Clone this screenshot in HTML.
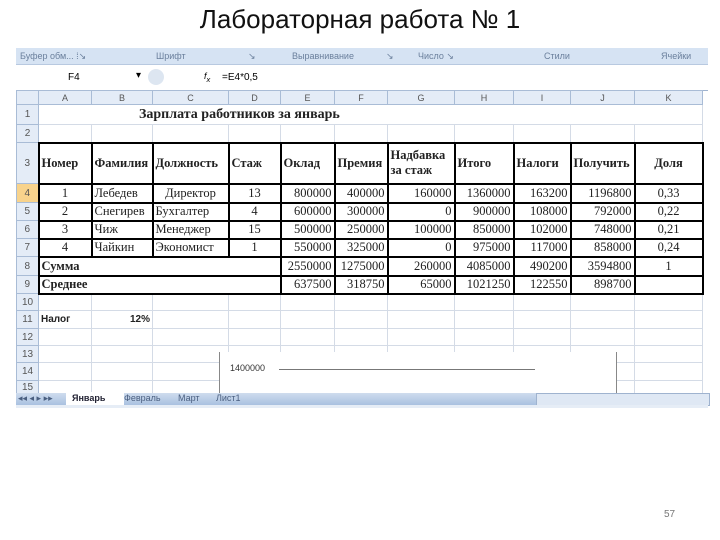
<!DOCTYPE html>
<html><head><meta charset="utf-8"><style>
body{margin:0;width:720px;height:540px;background:#fff;position:relative;overflow:hidden;font-family:"Liberation Sans",sans-serif}
.abs{position:absolute}
#title{left:0;width:720px;top:4px;text-align:center;font-size:26px;color:#111}
#rib{left:16px;top:48px;width:692px;height:16px;background:#d6e3f3;font-size:9px;color:#6a7f9c}
#rib span{position:absolute;top:3px}
#fx{left:16px;top:64px;width:692px;height:25px;background:#fff;border-top:1px solid #b8c9e0;border-bottom:1px solid #9fb3cf;font-size:10px}
table{position:absolute;left:16px;top:90px;border-collapse:collapse;table-layout:fixed;font-family:"Liberation Serif",serif;font-size:12.5px}
td{border:1px solid #d4dbe6;padding:0 2px;white-space:nowrap;overflow:hidden;color:#222}
tr.h td{background:#e4ecf7;color:#555;font-family:"Liberation Sans",sans-serif;font-size:9px;text-align:center;border-color:#a9bcd6}
td.rh{background:#e4ecf7;color:#555;font-family:"Liberation Sans",sans-serif;font-size:10px;text-align:center;border-color:#a9bcd6;padding:0}
td.k{border:2px solid #000}
td.b{font-weight:bold}
.r{text-align:right}.c{text-align:center}
td.or{background:#f8d38c}
</style></head><body>
<div class="abs" id="title">Лабораторная работа № 1</div>
<div class="abs" id="rib">
<span style="left:4px">Буфер обм... ⁞↘</span><span style="left:140px">Шрифт</span><span style="left:232px">↘</span>
<span style="left:276px">Выравнивание</span><span style="left:370px">↘</span><span style="left:402px">Число ↘</span><span style="left:528px">Стили</span><span style="left:645px">Ячейки</span>
</div>
<div class="abs" id="fx">
<span class="abs" style="left:52px;top:7px">F4</span><span class="abs" style="left:120px;top:5px">▾</span>
<span class="abs" style="left:132px;top:4px;width:16px;height:16px;border-radius:8px;background:#dde6f1"></span>
<span class="abs" style="left:188px;top:6px;font-style:italic;font-size:9px">f<sub>x</sub></span>
<span class="abs" style="left:206px;top:7px">=E4*0,5</span>
</div>
<table>
<colgroup><col style="width:22px"><col style="width:53px"><col style="width:61px"><col style="width:76px"><col style="width:52px"><col style="width:54px"><col style="width:53px"><col style="width:67px"><col style="width:59px"><col style="width:57px"><col style="width:64px"><col style="width:68px"></colgroup>
<tr class="h" style="height:14px"><td></td><td>A</td><td>B</td><td>C</td><td>D</td><td>E</td><td class="or">F</td><td>G</td><td>H</td><td>I</td><td>J</td><td>K</td></tr>
<tr style="height:20px"><td class="rh">1</td><td colspan="11" style="padding-left:100px;font-weight:bold;font-size:14px">Зарплата работников за январь</td></tr>
<tr style="height:18px"><td class="rh">2</td><td></td><td></td><td></td><td></td><td></td><td></td><td></td><td></td><td></td><td></td><td></td></tr>
<tr style="height:41px"><td class="rh">3</td><td class="k b">Номер</td><td class="k b">Фамилия</td><td class="k b">Должность</td><td class="k b">Стаж</td><td class="k b">Оклад</td><td class="k b">Премия</td><td class="k b" style="white-space:normal;line-height:15px">Надбавка за стаж</td><td class="k b">Итого</td><td class="k b">Налоги</td><td class="k b">Получить</td><td class="k b c">Доля</td></tr>
<tr style="height:19px"><td class="rh or">4</td><td class="k c">1</td><td class="k">Лебедев</td><td class="k c">Директор</td><td class="k c">13</td><td class="k r">800000</td><td class="k r">400000</td><td class="k r">160000</td><td class="k r">1360000</td><td class="k r">163200</td><td class="k r">1196800</td><td class="k c">0,33</td></tr>
<tr style="height:18px"><td class="rh">5</td><td class="k c">2</td><td class="k">Снегирев</td><td class="k">Бухгалтер</td><td class="k c">4</td><td class="k r">600000</td><td class="k r">300000</td><td class="k r">0</td><td class="k r">900000</td><td class="k r">108000</td><td class="k r">792000</td><td class="k c">0,22</td></tr>
<tr style="height:18px"><td class="rh">6</td><td class="k c">3</td><td class="k">Чиж</td><td class="k">Менеджер</td><td class="k c">15</td><td class="k r">500000</td><td class="k r">250000</td><td class="k r">100000</td><td class="k r">850000</td><td class="k r">102000</td><td class="k r">748000</td><td class="k c">0,21</td></tr>
<tr style="height:18px"><td class="rh">7</td><td class="k c">4</td><td class="k">Чайкин</td><td class="k">Экономист</td><td class="k c">1</td><td class="k r">550000</td><td class="k r">325000</td><td class="k r">0</td><td class="k r">975000</td><td class="k r">117000</td><td class="k r">858000</td><td class="k c">0,24</td></tr>
<tr style="height:19px"><td class="rh">8</td><td class="k b" colspan="4">Сумма</td><td class="k r">2550000</td><td class="k r">1275000</td><td class="k r">260000</td><td class="k r">4085000</td><td class="k r">490200</td><td class="k r">3594800</td><td class="k c">1</td></tr>
<tr style="height:18px"><td class="rh">9</td><td class="k b" colspan="4">Среднее</td><td class="k r">637500</td><td class="k r">318750</td><td class="k r">65000</td><td class="k r">1021250</td><td class="k r">122550</td><td class="k r">898700</td><td class="k"></td></tr>
<tr style="height:17px"><td class="rh">10</td><td></td><td></td><td></td><td></td><td></td><td></td><td></td><td></td><td></td><td></td><td></td></tr>
<tr style="height:18px"><td class="rh">11</td><td style="font-family:'Liberation Sans';font-size:10px;font-weight:bold">Налог</td><td class="r" style="font-family:'Liberation Sans';font-size:10px;font-weight:bold">12%</td><td></td><td></td><td></td><td></td><td></td><td></td><td></td><td></td><td></td></tr>
<tr style="height:17px"><td class="rh">12</td><td></td><td></td><td></td><td></td><td></td><td></td><td></td><td></td><td></td><td></td><td></td></tr>
<tr style="height:17px"><td class="rh">13</td><td></td><td></td><td></td><td></td><td></td><td></td><td></td><td></td><td></td><td></td><td></td></tr>
<tr style="height:18px"><td class="rh">14</td><td></td><td></td><td></td><td></td><td></td><td></td><td></td><td></td><td></td><td></td><td></td></tr>
<tr style="height:13px"><td class="rh">15</td><td></td><td></td><td></td><td></td><td></td><td></td><td></td><td></td><td></td><td></td><td></td></tr>
</table>
<div class="abs" style="left:219px;top:352px;width:396px;height:41px;background:#fff;border-left:1px solid #888;border-right:1px solid #888"></div>
<div class="abs" style="left:230px;top:363px;font-size:9px;color:#333">1400000</div>
<div class="abs" style="left:279px;top:369px;width:256px;border-top:1px solid #777"></div>
<div class="abs" style="left:16px;top:393px;width:692px;height:12px;background:linear-gradient(#cfdcee,#a9c1e0);font-size:9px;color:#4a5f80">
<span class="abs" style="left:2px;top:0">◂◂ ◂ ▸ ▸▸</span>
<span class="abs" style="left:50px;top:-1px;width:58px;height:13px;background:#fff"></span>
<span class="abs" style="left:56px;top:0;font-weight:bold;color:#223">Январь</span>
<span class="abs" style="left:108px;top:0">Февраль</span><span class="abs" style="left:162px;top:0">Март</span><span class="abs" style="left:200px;top:0">Лист1</span>
<span class="abs" style="left:520px;top:0;width:172px;height:11px;background:#dfe8f4;border:1px solid #9fb3cf"></span>
</div>
<div class="abs" style="left:16px;top:405px;width:692px;height:3px;background:#e6edf6"></div>
<div class="abs" style="left:664px;top:509px;font-size:10px;color:#777">57</div>
</body></html>
